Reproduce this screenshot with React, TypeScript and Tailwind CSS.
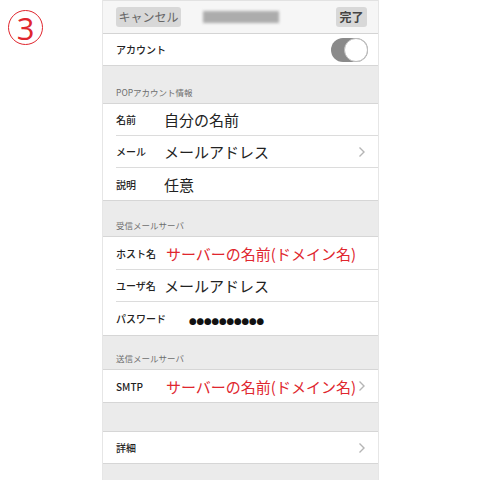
import React from "react";

const F = { fontFamily: '"Noto Sans CJK JP", "Noto Sans", sans-serif' };

function Chevron() {
  return (
    <svg width="8" height="12" viewBox="0 0 8 12" className="shrink-0">
      <path d="M1.5 1.5 L6 6 L1.5 10.5" fill="none" stroke="#b5b5b5" strokeWidth="1.4" />
    </svg>
  );
}

function Row({
  label,
  value,
  red,
  chevron,
  h,
  last,
}: {
  label: string;
  value?: React.ReactNode;
  red?: boolean;
  chevron?: boolean;
  h: string;
  last?: boolean;
}) {
  return (
    <div className={`bg-white pl-[13px] ${h}`}>
      <div className={`flex items-center h-full pr-[12px] ${last ? "" : "border-b border-[#dcdcdc]"}`}>
        <div className="w-[48px] shrink-0 whitespace-nowrap text-[10px] font-medium text-[#222]">{label}</div>
        <div className={`flex-1 text-[15px] leading-none whitespace-nowrap ${red ? "text-[#e0262e]" : "text-[#222]"}`}>{value}</div>
        {chevron && <Chevron />}
      </div>
    </div>
  );
}

function Header({ text, h }: { text?: string; h: string }) {
  return (
    <div className={`bg-[#ebebeb] border-b border-[#d6d6d6] pl-[13px] flex items-end pb-[4px] ${h}`}>
      {text && <span className="text-[8.5px] text-[#6e6e6e]">{text}</span>}
    </div>
  );
}

export default function App() {
  return (
    <div className="w-[480px] h-[480px] bg-white flex overflow-hidden" style={F}>
      <div className="w-[102px] shrink-0 pl-[8px] pt-[10px]">
        <div className="w-[35px] h-[35px] rounded-full border-[1.5px] border-[#e0262e] flex items-center justify-center">
          <span
            className="text-[31px] leading-none text-[#e0262e] mt-[1px]"
            style={{ fontFamily: '"Open Sans", Lato, sans-serif', fontWeight: 400 }}
          >
            3
          </span>
        </div>
      </div>
      <div className="w-[277px] shrink-0 h-full border-l border-r border-[#e6e6e6] bg-[#ebebeb] flex flex-col">
        {/* nav */}
        <div className="h-[34px] shrink-0 bg-[#f6f6f6] border-t border-[#e2e2e2] border-b border-b-[#d4d4d4] flex items-center pl-[13px] pr-[11px]">
          <div className="w-[65px] h-[20px] rounded-[3px] bg-[#d8d8d8] flex items-center justify-center text-[12px] text-[#666]">キャンセル</div>
          <div className="ml-[22px] w-[76px] h-[12px] bg-[#9a9a9a] blur-[1.5px] opacity-80" />
          <div className="flex-1" />
          <div className="w-[31px] h-[20px] rounded-[3px] bg-[#d8d8d8] flex items-center justify-center text-[12px] font-bold text-[#444]">完了</div>
        </div>
        {/* account */}
        <div className="h-[32px] shrink-0 bg-white border-b border-[#d6d6d6] flex items-center pl-[13px] pr-[10px]">
          <span className="text-[10px] font-medium text-[#222]">アカウント</span>
          <div className="flex-1" />
          <div className="w-[37px] h-[24px] rounded-full bg-[#8a8a8a] relative">
            <div className="absolute right-[0px] top-[0px] w-[24px] h-[24px] rounded-full bg-white border border-[#bdbdbd]" />
          </div>
        </div>
        <Header text="POPアカウント情報" h="h-[38px]" />
        <Row label="名前" value="自分の名前" h="h-[32px]" />
        <Row label="メール" value="メールアドレス" chevron h="h-[32px]" />
        <Row label="説明" value="任意" h="h-[32px]" last />
        <Header text="受信メールサーバ" h="h-[37px] border-t border-t-[#d6d6d6]" />
        <Row label="ホスト名" value={<span className="ml-[2px]">サーバーの名前(ドメイン名)</span>} red h="h-[33px]" />
        <Row label="ユーザ名" value="メールアドレス" h="h-[32px]" />
        <Row
          label="パスワード"
          value={<span className="ml-[25px] text-[7.5px] tracking-[0px] text-[#111]">●●●●●●●●●●</span>}
          h="h-[33px]"
          last
        />
        <Header text="送信メールサーバ" h="h-[35px] border-t border-t-[#d6d6d6]" />
        <Row label="SMTP" value={<span className="ml-[2px]">サーバーの名前(ドメイン名)</span>} red chevron h="h-[32px]" last />
        <Header h="h-[30px] border-t border-t-[#d6d6d6]" />
        <Row label="詳細" chevron h="h-[31px]" last />
        <div className="flex-1 border-t border-[#d6d6d6]" />
      </div>
      <div className="flex-1" />
    </div>
  );
}
